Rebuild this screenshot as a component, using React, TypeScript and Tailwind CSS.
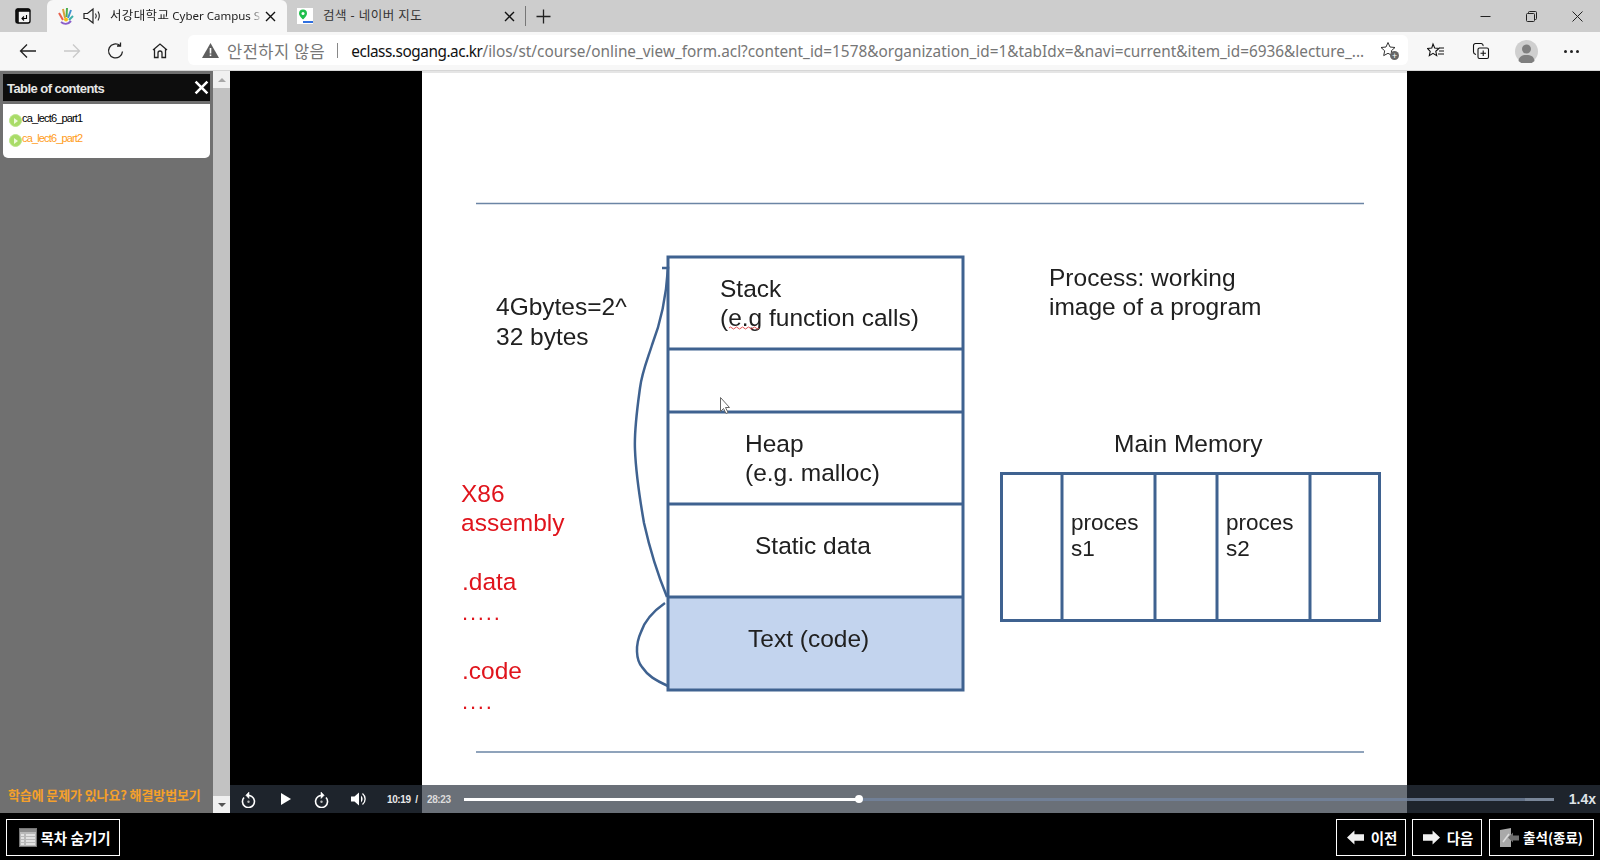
import React from "react";

const ui = { fontFamily: '"Noto Sans", "Noto Sans CJK KR", sans-serif' };
const kr = { fontFamily: '"Noto Sans CJK KR", "Liberation Sans", sans-serif' };
const ar = { fontFamily: '"Liberation Sans", "Noto Sans CJK KR", sans-serif' };

function Ico({ w = 20, h = 20, vb = "0 0 20 20", children, className = "" }: { w?: number; h?: number; vb?: string; children: React.ReactNode; className?: string }) {
  return (
    <svg width={w} height={h} viewBox={vb} fill="none" stroke="currentColor" strokeWidth={1.2} className={"shrink-0 " + className}>
      {children}
    </svg>
  );
}

function X({ s = 11 }: { s?: number }) {
  return (
    <Ico w={s} h={s} vb="0 0 11 11" className="text-[#111]">
      <path d="M1 1l9 9M10 1l-9 9" strokeWidth={1.4} />
    </Ico>
  );
}

function TabStrip() {
  return (
    <div className="flex h-8 bg-[#cdcdcd] items-end shrink-0">
      <div className="w-[47px] h-8 flex items-center justify-center pr-[1px]">
        <Ico w={16} h={16} vb="0 0 16 16" className="text-black">
          <rect x="1" y="1" width="14" height="14" rx="2" fill="#f4f4f4" strokeWidth={1.3} />
          <path d="M1 3a2 2 0 012-2h10a2 2 0 012 2v.5H1z" fill="#111" strokeWidth={0.5} />
          <rect x="1" y="1" width="2.500" height="14" fill="#111" strokeWidth={0.5} />
          <path d="M11.500 7v3.500h-4.500M9 8.500l-2 2 2 2" strokeWidth={1.1} />
        </Ico>
      </div>
      <div className="w-[240px] h-8 bg-[#f7f7f7] rounded-t-md flex items-center pl-[11px] pr-[11px]">
        <svg width="16" height="18" viewBox="0 0 16 18" className="shrink-0">
          <path d="M1 6l4 7" stroke="#e8604c" strokeWidth="2" />
          <path d="M5 2l2 9" stroke="#d9a13a" strokeWidth="2" />
          <path d="M9 1l-.5 9" stroke="#4caf50" strokeWidth="2" />
          <path d="M13 3l-3 8" stroke="#3f8fd0" strokeWidth="2" />
          <path d="M15 9l-4 4" stroke="#3db0a8" strokeWidth="2" />
          <circle cx="8" cy="12.5" r="2" fill="#f3c016" />
          <path d="M3 15c3 2.500 7 2.500 10-1" stroke="#8b5fc9" strokeWidth="2" fill="none" />
        </svg>
        <Ico w={20} h={18} vb="0 0 20 18" className="ml-[9px] text-[#222]">
          <path d="M1 6.500h3.500L10 2v14l-5.500-4.500H1z" />
          <path d="M12.500 6.500c1 1.500 1 3.500 0 5M15 4.500c1.600 2.800 1.600 6.200 0 9" strokeWidth={1.1} />
        </Ico>
        <div className="ml-[7px] whitespace-nowrap text-[11.500px] text-[#222]" style={{ ...ui, WebkitMaskImage: "linear-gradient(90deg,#000 93%,rgba(0,0,0,0.2))" }}>
          <span className="text-[12.500px] tracking-[0.35px]">서강대학교</span> Cyber Campus S
        </div>
        <div className="ml-auto"><X /></div>
      </div>
      <div className="w-[238px] h-8 flex items-center pl-[10px] pr-[10px]">
        <svg width="16" height="16" viewBox="0 0 16 16" className="shrink-0">
          <rect width="16" height="16" fill="#fff" />
          <path d="M6 1.500a4 4 0 014 4c0 2.500-4 6-4 6s-4-3.500-4-6a4 4 0 014-4z" fill="#1fbf4c" />
          <circle cx="6" cy="5.500" r="1.500" fill="#fff" />
          <rect x="6" y="13" width="10" height="2" fill="#2f6fe0" />
        </svg>
        <span className="ml-[10px] text-[12.500px] text-[#333] tracking-[0.45px]" style={ui}>검색 - 네이버 지도</span>
        <div className="ml-auto"><X /></div>
      </div>
      <div className="w-px h-5 bg-[#777] mb-[6px] ml-0" />
      <div className="w-[34px] h-8 flex items-center justify-center">
        <Ico w={15} h={15} vb="0 0 15 15" className="text-[#222]"><path d="M7.500 0.500v14M0.500 7.500h14" strokeWidth={1.3} /></Ico>
      </div>
      <div className="ml-auto flex h-8 items-center text-[#222]">
        <div className="w-[46px] flex justify-center"><Ico w={11} h={11} vb="0 0 11 11"><path d="M0.500 5.500h10" strokeWidth={1} /></Ico></div>
        <div className="w-[46px] flex justify-center">
          <Ico w={11} h={11} vb="0 0 11 11"><rect x="0.500" y="2.500" width="8" height="8" rx="1" strokeWidth={1} /><path d="M2.500 2.500v-1a1 1 0 011-1h6a1 1 0 011 1v6a1 1 0 01-1 1h-1" strokeWidth={1} /></Ico>
        </div>
        <div className="w-[46px] flex justify-center"><Ico w={11} h={11} vb="0 0 11 11"><path d="M0.500 0.500l10 10M10.500 0.500l-10 10" strokeWidth={1} /></Ico></div>
      </div>
    </div>
  );
}

function Toolbar() {
  return (
    <div className="h-[39px] bg-[#f7f7f7] border-b border-[#d6d6d6] flex items-center shrink-0">
      <div className="w-[188px] flex items-center shrink-0 text-[#222]">
        <div className="w-[56px] flex justify-center pl-0">
          <Ico w={18} h={16} vb="0 0 18 16"><path d="M17 8H1.500M8 1.500L1.500 8 8 14.500" strokeWidth={1.3} /></Ico>
        </div>
        <div className="w-[32px] flex justify-center text-[#c9c9c9]">
          <Ico w={18} h={16} vb="0 0 18 16"><path d="M1 8h15.500M10 1.500L16.500 8 10 14.500" strokeWidth={1.3} /></Ico>
        </div>
        <div className="w-[56px] flex justify-center">
          <Ico w={18} h={18} vb="0 0 18 18"><path d="M15.500 9.500a7 7 0 11-2.500-6M13.500 0.500v3.500H10" strokeWidth={1.3} /></Ico>
        </div>
        <div className="w-[32px] flex justify-center">
          <Ico w={16} h={16} vb="0 0 16 16"><path d="M1 7l7-6 7 6M2.500 6v8.500h3.500v-4.500a2 2 0 014 0v4.500h3.500V6" strokeWidth={1.3} /></Ico>
        </div>
      </div>
      <div className="w-[1220px] h-[30px] mb-[2px] bg-white rounded-md flex items-center pl-[14px] shrink-0">
        <svg width="17" height="15" viewBox="0 0 17 15" className="shrink-0">
          <path d="M8.500 0L17 15H0z" fill="#5f5f5f" />
          <rect x="7.700" y="5" width="1.600" height="5.500" fill="#fff" />
          <rect x="7.700" y="11.500" width="1.600" height="1.600" fill="#fff" />
        </svg>
        <span className="ml-[8px] mt-[2px] text-[16.500px] text-[#777] whitespace-nowrap tracking-[0.5px]" style={kr}>안전하지 않음</span>
        <span className="ml-[12px] w-px h-[15px] bg-[#888]" />
        <div className="ml-[13px] w-[1016px] mt-[3px] whitespace-nowrap text-[15.350px] text-[#767676]" style={ui}>
          <span className="text-[#111] tracking-[-0.45px]">eclass.sogang.ac.kr</span>/ilos/st/course/online_view_form.acl?content_id=1578&amp;organization_id=1&amp;tabIdx=&amp;navi=current&amp;item_id=6936&amp;lecture_...
        </div>
        <div className="ml-auto mr-[10px] relative text-[#333]">
          <Ico w={18} h={18} vb="0 0 18 18"><path d="M8 1.500l2 4.500 5 .5-3.700 3.300 1 4.800L8 12.300 3.700 14.600l1-4.800L1 6.500l5-.5z" strokeWidth={1} /></Ico>
          <span className="absolute right-[-1px] bottom-[-1px] w-[9px] h-[9px] rounded-full bg-[#666] flex items-center justify-center text-white text-[9px] leading-none">+</span>
        </div>
      </div>
      <div className="flex-1 flex items-center text-[#111]">
        <div className="w-[56px] flex justify-center">
          <Ico w={18} h={18} vb="0 0 18 18"><path d="M6 2l1.700 4 4.300.4-3.200 2.900.9 4.300L6 11.400 2.300 13.600l.9-4.300L0.500 6.400l4.300-.4zM12 6h5M12 9h5M11 12h6" strokeWidth={1.1} /></Ico>
        </div>
        <div className="w-[33px] flex justify-center">
          <Ico w={18} h={18} vb="0 0 18 18"><rect x="6" y="6" width="10.500" height="10.500" rx="1.500" strokeWidth={1.1} /><path d="M11.200 8.500v5.500M8.500 11.200h5.500M4 12.500C2 12 1.500 11 1.500 10V3.500a2 2 0 012-2H9a2 2 0 012 2.500" strokeWidth={1.1} /></Ico>
        </div>
        <div className="w-[58px] flex justify-center">
          <svg width="23" height="23" viewBox="0 0 23 23">
            <circle cx="11.500" cy="11.500" r="11.500" fill="#cfcfcf" />
            <circle cx="11.500" cy="9" r="4.500" fill="#7f7f7f" />
            <path d="M3.500 21c.5-4.500 3.500-6 8-6s7.500 1.500 8 6a11.500 11.500 0 01-16 0z" fill="#7f7f7f" />
          </svg>
        </div>
        <div className="w-[32px] flex justify-center gap-[3px]">
          <span className="w-[3px] h-[3px] bg-[#222] rounded-full" />
          <span className="w-[3px] h-[3px] bg-[#222] rounded-full" />
          <span className="w-[3px] h-[3px] bg-[#222] rounded-full" />
        </div>
      </div>
    </div>
  );
}

function TocRow({ label, active }: { label: string; active?: boolean }) {
  return (
    <div className="flex items-center h-[20px]">
      <span className="w-[13px] h-[13px] rounded-full bg-[#a9dc68] border border-[#bde58c] flex items-center justify-center mt-[3px] shrink-0">
        <span className="w-0 h-0 border-y-[3px] border-y-transparent border-l-[4px] border-l-[#eef8dc] ml-[1px]" />
      </span>
      <span className={"ml-[0px] -mt-[2px] text-[11px] tracking-[-0.85px] " + (active ? "text-[#ff9c1a]" : "text-black")} style={ar}>{label}</span>
    </div>
  );
}

function Sidebar() {
  return (
    <div className="w-[213px] bg-[#707070] flex flex-col pt-[3px] px-[3px] shrink-0">
      <div className="w-[207px] h-[27px] bg-[#0d0d0d] flex items-center justify-between pl-[4px] pr-[1px]">
        <span className="mt-[3px] text-[13px] font-bold text-[#e6e6e6] tracking-[-0.55px]" style={ar}>Table of contents</span>
        <Ico w={15} h={15} vb="0 0 14 14" className="text-white"><path d="M1.500 1.500l11 11M12.500 1.500l-11 11" strokeWidth={2.4} /></Ico>
      </div>
      <div className="w-[207px] h-[54px] mt-[3px] bg-white rounded-b-[5px] pl-[6px] pt-[5px]">
        <TocRow label="ca_lect6_part1" />
        <TocRow label="ca_lect6_part2" active />
      </div>
      <div className="mt-auto mb-[9px] pl-[5px] text-[13px] font-bold text-[#f5a02a] tracking-[-0.12px] whitespace-nowrap" style={kr}>
        학습에 문제가 있나요? 해결방법보기
      </div>
    </div>
  );
}

function ScrollBar() {
  return (
    <div className="w-[17px] bg-[#f0f0f0] flex flex-col items-center shrink-0">
      <div className="h-[17px] flex items-center justify-center">
        <span className="w-0 h-0 border-x-[4px] border-x-transparent border-b-[4px] border-b-[#a8a8a8]" />
      </div>
      <div className="w-full flex-1 bg-[#c2c2c2]" />
      <div className="h-[17px] flex items-center justify-center">
        <span className="w-0 h-0 border-x-[4px] border-x-transparent border-t-[4px] border-t-[#555]" />
      </div>
    </div>
  );
}

const ink = "#3f6290";
function T({ x, y, c = "#202020", s = 24.5, ls = 0, children }: { x: number; y: number; c?: string; s?: number; ls?: number; children: React.ReactNode }) {
  return <text x={x} y={y} fill={c} fontSize={s} letterSpacing={ls} style={ar}>{children}</text>;
}

function Slide() {
  const rows = [349, 412, 504, 597];
  const cols = [1062, 1155, 1217, 1310];
  return (
    <svg viewBox="422 71 985 742" width="985" height="742" className="block bg-white shrink-0">
      <g className="blur-[0.4px]">
        <path d="M422 72h985" stroke="#dcdcdc" strokeWidth="1.500" />
        <path d="M476 203.500h888M476 752h888" stroke="#6b85a5" strokeWidth="1.300" />
        <rect x="668" y="597" width="295" height="93" fill="#c3d4ee" />
        <rect x="668" y="257" width="295" height="433" fill="none" stroke={ink} strokeWidth="3" />
        {rows.map((y) => <path key={y} d={`M668 ${y}H963`} stroke={ink} strokeWidth="3" />)}
        <rect x="1001.500" y="473.500" width="378" height="147" fill="none" stroke={ink} strokeWidth="3" />
        {cols.map((x) => <path key={x} d={`M${x} 473V620`} stroke={ink} strokeWidth="3" />)}
        <path d="M662 268h6C666 300 661 322 652 345C648 358 642 372 640 388C637 410 634 430 635 450C636 475 640 500 644 523C650 550 660 580 667 597" fill="none" stroke={ink} strokeWidth="2.500" />
        <path d="M665 603C655 610 645 620 641 632C635 645 636 660 642 667C648 676 655 680 668 686" fill="none" stroke={ink} strokeWidth="2.500" />
        <T x={496} y={315}>4Gbytes=2^</T>
        <T x={496} y={345}>32 bytes</T>
        <T x={720} y={297}>Stack</T>
        <T x={720} y={326}>(e.g function calls)</T>
        <path d="M729 328q1.500-2 3 0t3 0 3 0 3 0 3 0 3 0 3 0 3 0 3 0 3 0" stroke="#e05050" strokeWidth="1" fill="none" />
        <T x={745} y={452}>Heap</T>
        <T x={745} y={481}>(e.g. malloc)</T>
        <T x={755} y={554}>Static data</T>
        <T x={748} y={647}>Text (code)</T>
        <T x={1049} y={286}>Process: working</T>
        <T x={1049} y={315}>image of a program</T>
        <T x={1114} y={452}>Main Memory</T>
        <T x={1071} y={530} s={22.500}>proces</T>
        <T x={1071} y={556} s={22.500}>s1</T>
        <T x={1226} y={530} s={22.500}>proces</T>
        <T x={1226} y={556} s={22.500}>s2</T>
        <T x={461} y={502} c="#e0141c">X86</T>
        <T x={461} y={531} c="#e0141c">assembly</T>
        <T x={462} y={590} c="#e0141c">.data</T>
        <T x={462} y={620} c="#e0141c" s={22} ls={1.8}>.....</T>
        <T x={462} y={679} c="#e0141c">.code</T>
        <T x={462} y={709} c="#e0141c" s={22} ls={1.8}>....</T>
        <path d="M720.500 397.500v14l3-3 2.500 5 2-1-2.500-5h4z" fill="#fff" stroke="#666" strokeWidth="1" />
      </g>
    </svg>
  );
}

function Controls() {
  return (
    <div className="absolute left-0 right-0 bottom-0 h-[28px] bg-[#2b333f]/70 flex items-center text-white">
      <div className="w-[37px] flex justify-center ml-0">
        <svg width="15" height="17" viewBox="0 0 15 17" fill="none" stroke="#fff" strokeWidth="1.600">
          <path d="M3 6.500a6 6 0 108-.8 6 6 0 00-4.500-1.300" /><path d="M8 1L4.800 4.300 8 7.500z" fill="#fff" strokeWidth="0.500" /><circle cx="7.500" cy="10.800" r="1.200" fill="#bbb" stroke="none" />
        </svg>
      </div>
      <div className="w-[37px] flex justify-center">
        <svg width="10" height="12" viewBox="0 0 10 12"><path d="M0 0l10 6-10 6z" fill="#fff" /></svg>
      </div>
      <div className="w-[35px] flex justify-center">
        <svg width="15" height="17" viewBox="0 0 15 17" fill="none" stroke="#fff" strokeWidth="1.600">
          <path d="M12 6.500a6 6 0 11-8-.8 6 6 0 014.500-1.300" /><path d="M7 1l3.200 3.300L7 7.500z" fill="#fff" strokeWidth="0.500" /><circle cx="7.500" cy="10.800" r="1.200" fill="#bbb" stroke="none" />
        </svg>
      </div>
      <div className="w-[39px] flex justify-center">
        <svg width="15" height="14" viewBox="0 0 15 14" fill="#fff"><path d="M0 4.500h3.500L8 0.500v13l-4.500-4H0z" /><path d="M10 3.500c2.200 2 2.200 5 0 7z" /><path d="M11.500 1.500c3.500 3 3.500 8 0 11" fill="none" stroke="#fff" strokeWidth="1.300" /></svg>
      </div>
      <div className="ml-[9px] flex items-center whitespace-nowrap text-[10px] font-bold text-[#e8e8e8] tracking-[-0.4px]" style={ar}>
        <span className="w-[40px]">10:19&nbsp; /</span>
        <span className="text-[#dcdcdc]">28:23</span>
      </div>
      <div className="ml-[13px] w-[1090px] h-[3px] bg-[#73859f]/80 relative">
        <div className="absolute left-0 top-0 bottom-0 w-[395px] bg-white" />
        <div className="absolute left-[391px] top-[-2.500px] w-[8px] h-[8px] bg-white rounded-full" />
        <div className="absolute right-0 top-0 bottom-0 w-[29px] bg-white/15" />
      </div>
      <span className="ml-auto mr-[4px] text-[14px] font-bold text-[#dfe3e8]" style={ar}>1.4x</span>
    </div>
  );
}

function Btn({ className = "", children }: { className?: string; children: React.ReactNode }) {
  return (
    <div className={"h-[37px] border border-white flex items-center justify-center text-white font-bold " + className} style={kr}>
      {children}
    </div>
  );
}

function BottomBar() {
  return (
    <div className="h-[47px] bg-black flex items-center pt-[6px] pb-[4px] shrink-0">
      <Btn className="w-[114px] ml-[6px] text-[14.500px] pl-[3px]">
        <svg width="18" height="19" viewBox="0 0 18 19" className="mr-[4px]">
          <rect x="0.500" y="0.500" width="17" height="18" fill="#b9b9b9" stroke="#777" />
          <rect x="1" y="1" width="16" height="3" fill="#8c8c8c" />
          <path d="M2 7h3M7 7h9M2 10h3M7 10h9M2 13h3M7 13h9M2 16h3M7 16h9" stroke="#eee" strokeWidth="1.400" />
        </svg>
        목차 숨기기
      </Btn>
      <Btn className="w-[70px] ml-auto text-[14.500px] pl-[2px]">
        <svg width="17" height="15" viewBox="0 0 16 14" className="mr-[7px]"><path d="M0 7l7-6.500V4h9v6H7v3.500z" fill="#f0f0f0" /></svg>
        이전
      </Btn>
      <Btn className="w-[70px] ml-[6px] text-[14.500px] pl-[2px]">
        <svg width="17" height="15" viewBox="0 0 16 14" className="mr-[7px]"><path d="M16 7L9 .5V4H0v6h9v3.500z" fill="#f0f0f0" /></svg>
        다음
      </Btn>
      <Btn className="w-[105px] ml-[7px] mr-[6px] text-[13.500px]">
        <svg width="19" height="19" viewBox="0 0 19 19" className="mr-[4px]">
          <path d="M0 2l11-2v19H0z" fill="#a9a9a9" />
          <path d="M3 14l6-8" stroke="#ddd" strokeWidth="1.500" />
          <path d="M8 9.500l5-5v3h6v5h-6v2z" fill="#6e6e6e" />
        </svg>
        출석(종료)
      </Btn>
    </div>
  );
}

export default function App() {
  return (
    <div className="w-[1600px] h-[860px] overflow-hidden flex flex-col bg-black" style={ui}>
      <TabStrip />
      <Toolbar />
      <div className="flex flex-1 min-h-0">
        <Sidebar />
        <ScrollBar />
        <div className="flex-1 relative bg-black flex justify-center pr-[2px]">
          <Slide />
          <Controls />
        </div>
      </div>
      <BottomBar />
    </div>
  );
}
